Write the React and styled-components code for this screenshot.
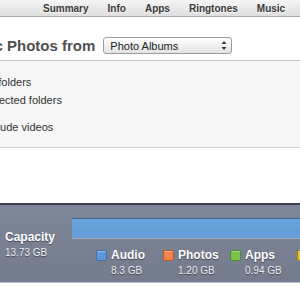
import React from "react";
import styled, { createGlobalStyle } from "styled-components";

const GlobalStyle = createGlobalStyle`
  html, body {
    margin: 0;
    padding: 0;
    background: #ffffff;
  }
  body {
    font-family: "Liberation Sans", Arial, sans-serif;
  }
`;

const tabs = ["Summary", "Info", "Apps", "Ringtones", "Music"];

const options = [
  { label: "All folders", gap: 0 },
  { label: "Selected folders", gap: 0 },
  { label: "Include videos", gap: 9 },
];

const legend = [
  { name: "Audio", size: "8.3 GB", color: "#5d98d9", edge: "#3f6fa8" },
  { name: "Photos", size: "1.20 GB", color: "#f0844c", edge: "#b55a2a" },
  { name: "Apps", size: "0.94 GB", color: "#7cc14e", edge: "#4f8a2c" },
  { name: "Books", size: "0.20 GB", color: "#e9c22c", edge: "#a98614" },
];

const Page = styled.div`
  width: 300px;
  height: 300px;
  overflow: hidden;
  background: #ffffff;
`;

// the screenshot is a crop of a wider window, so the window starts left of the view
const Window = styled.div`
  width: 420px;
  margin-left: -33px;
  display: flex;
  flex-direction: column;
`;

const TabBar = styled.div`
  height: 16px;
  display: flex;
  align-items: center;
  gap: 19px;
  padding-left: 76px;
  background: linear-gradient(#f5f5f5, #dedede);
  border-bottom: 1px solid #a7a7a7;
`;

const Tab = styled.span`
  font-size: 10px;
  font-weight: bold;
  color: #3a3a3a;
  text-shadow: 0 1px 0 rgba(255, 255, 255, 0.7);
`;

const HeadRow = styled.div`
  height: 43px;
  box-sizing: border-box;
  padding-top: 14px;
  display: flex;
  align-items: center;
  gap: 8px;
`;

const Heading = styled.h1`
  margin: 0;
  font-size: 15px;
  font-weight: bold;
  color: #4f4f4f;
  white-space: nowrap;
`;

const Select = styled.div`
  width: 129px;
  height: 17px;
  box-sizing: border-box;
  border: 1px solid #9c9c9c;
  border-radius: 3px;
  background: linear-gradient(#ffffff, #e3e3e3);
  display: flex;
  align-items: center;
  justify-content: space-between;
  padding: 0 4px 0 6px;
  font-size: 11px;
  color: #222222;
`;

const Panel = styled.div`
  background: #f6f6f6;
  border-top: 1px solid #c6c6c6;
  border-bottom: 1px solid #d2d2d2;
  padding: 12px 0 11px 16px;
  margin-bottom: 55px;
`;

const Option = styled.div`
  font-size: 11px;
  line-height: 18px;
  color: #333333;
  white-space: nowrap;
  margin-top: ${(p) => p.$gap}px;
`;

const Capacity = styled.div`
  height: 80px;
  box-sizing: border-box;
  border-top: 2px solid #3b414d;
  border-bottom: 1px solid #b9bcc4;
  background: linear-gradient(#7f8698, #747b8c);
  display: flex;
`;

const Label = styled.div`
  width: 67px;
  padding: 25px 0 0 38px;
  color: #ffffff;
  text-shadow: 0 1px 1px rgba(0, 0, 0, 0.45);
`;

const LabelTitle = styled.div`
  font-size: 12px;
  line-height: 14px;
  font-weight: bold;
`;

const LabelValue = styled.div`
  margin-top: 3px;
  font-size: 10px;
  line-height: 12px;
  color: #eceef2;
`;

const Meter = styled.div`
  flex: 1;
  padding-top: 13px;
`;

const Bar = styled.div`
  height: 19px;
  background: linear-gradient(#6aa2dc, #649cd7);
  border-top: 1px solid #3d6898;
  box-shadow: 0 1px 0 #a6acb9;
`;

const Legend = styled.div`
  display: flex;
  padding: 10px 0 0 24px;
`;

const Item = styled.div`
  width: 67px;
  flex: none;
  display: flex;
  align-items: flex-start;
  gap: 4px;
`;

const Swatch = styled.span`
  width: 11px;
  height: 11px;
  margin-top: 2px;
  box-sizing: border-box;
  border-radius: 2px;
  border: 1px solid ${(p) => p.$edge};
  background: ${(p) => p.$color};
  box-shadow: inset 0 1px 0 rgba(255, 255, 255, 0.35);
`;

const ItemText = styled.div`
  color: #ffffff;
  text-shadow: 0 1px 1px rgba(0, 0, 0, 0.45);
`;

const ItemName = styled.div`
  font-size: 12px;
  line-height: 14px;
  font-weight: bold;
`;

const ItemSize = styled.div`
  margin-top: 3px;
  font-size: 10px;
  line-height: 12px;
  color: #eceef2;
`;

const Arrows = () => (
  <svg width="6" height="9" viewBox="0 0 6 9">
    <path d="M3 0 L5.5 3 L0.5 3 Z" fill="#3a3a3a" />
    <path d="M3 9 L5.5 6 L0.5 6 Z" fill="#3a3a3a" />
  </svg>
);

export default function App() {
  return (
    <Page>
      <GlobalStyle />
      <Window>
        <TabBar>
          {tabs.map((t) => (
            <Tab key={t}>{t}</Tab>
          ))}
        </TabBar>
        <HeadRow>
          <Heading>Sync Photos from</Heading>
          <Select>
            <span>Photo Albums</span>
            <Arrows />
          </Select>
        </HeadRow>
        <Panel>
          {options.map((o) => (
            <Option key={o.label} $gap={o.gap}>
              {o.label}
            </Option>
          ))}
        </Panel>
        <Capacity>
          <Label>
            <LabelTitle>Capacity</LabelTitle>
            <LabelValue>13.73 GB</LabelValue>
          </Label>
          <Meter>
            <Bar />
            <Legend>
              {legend.map((l) => (
                <Item key={l.name}>
                  <Swatch $color={l.color} $edge={l.edge} />
                  <ItemText>
                    <ItemName>{l.name}</ItemName>
                    <ItemSize>{l.size}</ItemSize>
                  </ItemText>
                </Item>
              ))}
            </Legend>
          </Meter>
        </Capacity>
      </Window>
    </Page>
  );
}
